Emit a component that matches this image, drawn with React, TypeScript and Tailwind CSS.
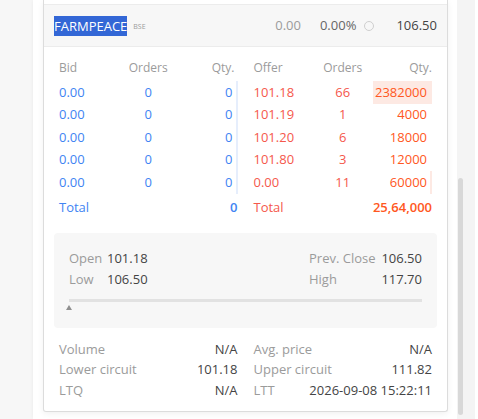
const bids = [
  { price: '0.00', orders: '0', qty: '0', bar: '2px' },
  { price: '0.00', orders: '0', qty: '0', bar: '2px' },
  { price: '0.00', orders: '0', qty: '0', bar: '2px' },
  { price: '0.00', orders: '0', qty: '0', bar: '2px' },
  { price: '0.00', orders: '0', qty: '0', bar: '2px' },
];

const offers = [
  { price: '101.18', orders: '66', qty: '2382000', bar: '100%' },
  { price: '101.19', orders: '1', qty: '4000', bar: '0px' },
  { price: '101.20', orders: '6', qty: '18000', bar: '0px' },
  { price: '101.80', orders: '3', qty: '12000', bar: '0px' },
  { price: '0.00', orders: '11', qty: '60000', bar: '1.5px' },
];

const stats = [
  ['Volume', 'N/A', 'Avg. price', 'N/A'],
  ['Lower circuit', '101.18', 'Upper circuit', '111.82'],
  ['LTQ', 'N/A', 'LTT', '2026-09-08 15:22:11'],
];

type Level = { price: string; orders: string; qty: string; bar: string };

function DepthSide({
  title,
  rows,
  total,
  text,
  qtyText,
  barColor,
  headPad,
}: {
  title: string;
  rows: Level[];
  total: string;
  text: string;
  qtyText: string;
  barColor: string;
  headPad: string;
}) {
  return (
    <div>
      <div className="grid h-[22px] grid-cols-3 items-center text-[12px] text-[#9b9b9b]">
        <span>{title}</span>
        <span className="text-center">Orders</span>
        <span className={`text-right ${headPad}`}>Qty.</span>
      </div>
      <div className="mt-[2px]">
        {rows.map((r, i) => (
          <div key={i} className="grid h-[22.5px] grid-cols-3 items-center text-[13px]">
            <span className={text}>{r.price}</span>
            <span className={`text-center ${text}`}>{r.orders}</span>
            <span
              className={`flex h-full items-center justify-end pr-[5px] ${qtyText}`}
              style={{
                background: `linear-gradient(to left, ${barColor} ${r.bar}, transparent ${r.bar})`,
              }}
            >
              {r.qty}
            </span>
          </div>
        ))}
      </div>
      <div className="mt-[3px] flex h-[22.5px] items-center justify-between text-[13px]">
        <span className={text}>Total</span>
        <span className={`font-semibold ${qtyText}`}>{total}</span>
      </div>
    </div>
  );
}

export default function App() {
  return (
    <div className="flex h-[419px] w-full overflow-hidden bg-white font-['Open_Sans',sans-serif] text-[#444]">
      <div className="w-[33px] shrink-0 bg-[#f7f7f7]" />

      <div className="w-[424px] shrink-0 bg-white pl-[10px] pr-[9px] shadow-[0_0_4px_rgba(0,0,0,0.06)]">
        <div className="w-[405px] rounded-b-[3px] border border-t-0 border-[#dcdcdc] bg-white shadow-[0_2px_6px_rgba(0,0,0,0.06)]">
          <div className="h-[4px]" />

          {/* instrument header */}
          <div className="flex h-[43px] items-center border-y border-[#ececec] bg-[#f7f7f7] pl-[10px] pr-[10px] text-[13px]">
            <span className="bg-[#3367d6] leading-[20px] text-white">FARMPEACE</span>
            <span className="ml-[6px] mt-[3px] text-[7px] text-[#9b9b9b]">BSE</span>
            <span className="ml-auto text-[#9b9b9b]">0.00</span>
            <span className="ml-[19px] text-[#666]">0.00%</span>
            <span className="ml-[8px] h-[10px] w-[10px] rounded-full border border-[#cfcfcf]" />
            <span className="ml-[22px] text-[#444]">106.50</span>
          </div>

          {/* market depth */}
          <div className="grid grid-cols-2 gap-x-[16px] px-[15px] pt-[10px]">
            <DepthSide
              title="Bid"
              rows={bids}
              total="0"
              text="text-[#4184f3]"
              qtyText="text-[#4184f3]"
              barColor="#e6eefc"
              headPad="pr-[3px]"
            />
            <DepthSide
              title="Offer"
              rows={offers}
              total="25,64,000"
              text="text-[#f5584c]"
              qtyText="text-[#ff5722]"
              barColor="#fde9e3"
              headPad=""
            />
          </div>

          {/* OHLC box */}
          <div className="mx-[10px] mt-[14px] h-[95px] rounded-[4px] bg-[#f7f7f7] px-[15px] pt-[15px] text-[13px]">
            <div className="flex h-[21px] items-center">
              <span className="w-[38px] text-[#9b9b9b]">Open</span>
              <span>101.18</span>
              <div className="ml-auto flex w-[113px] justify-between">
                <span className="text-[#9b9b9b]">Prev. Close</span>
                <span>106.50</span>
              </div>
            </div>
            <div className="flex h-[21px] items-center">
              <span className="w-[38px] text-[#9b9b9b]">Low</span>
              <span>106.50</span>
              <div className="ml-auto flex w-[113px] justify-between">
                <span className="text-[#9b9b9b]">High</span>
                <span>117.70</span>
              </div>
            </div>
            <div className="mt-[9px] h-[3px] bg-[#e2e2e2]" />
            <div className="-ml-[3.5px] mt-[3px] h-0 w-0 border-x-[3.5px] border-b-[5px] border-x-transparent border-b-[#8f8f8f]" />
          </div>

          {/* quote details */}
          <div className="grid grid-cols-2 gap-x-[16px] px-[15px] pb-[10px] pt-[11px] text-[13px]">
            {stats.map(([l1, v1, l2, v2]) => (
              <div key={l1} className="contents">
                <div className="flex h-[20.5px] items-center justify-between">
                  <span className="text-[#9b9b9b]">{l1}</span>
                  <span>{v1}</span>
                </div>
                <div className="flex h-[20.5px] items-center justify-between">
                  <span className="text-[#9b9b9b]">{l2}</span>
                  <span>{v2}</span>
                </div>
              </div>
            ))}
          </div>
        </div>
      </div>

      {/* scrollbar */}
      <div className="w-[18px] shrink-0 bg-[#f4f4f4] pl-[1px]">
        <div className="mt-[178px] h-[237px] w-[5px] rounded-[3px] bg-[#d8d8d8]" />
      </div>
      <div className="flex-1 bg-white" />
    </div>
  );
}
